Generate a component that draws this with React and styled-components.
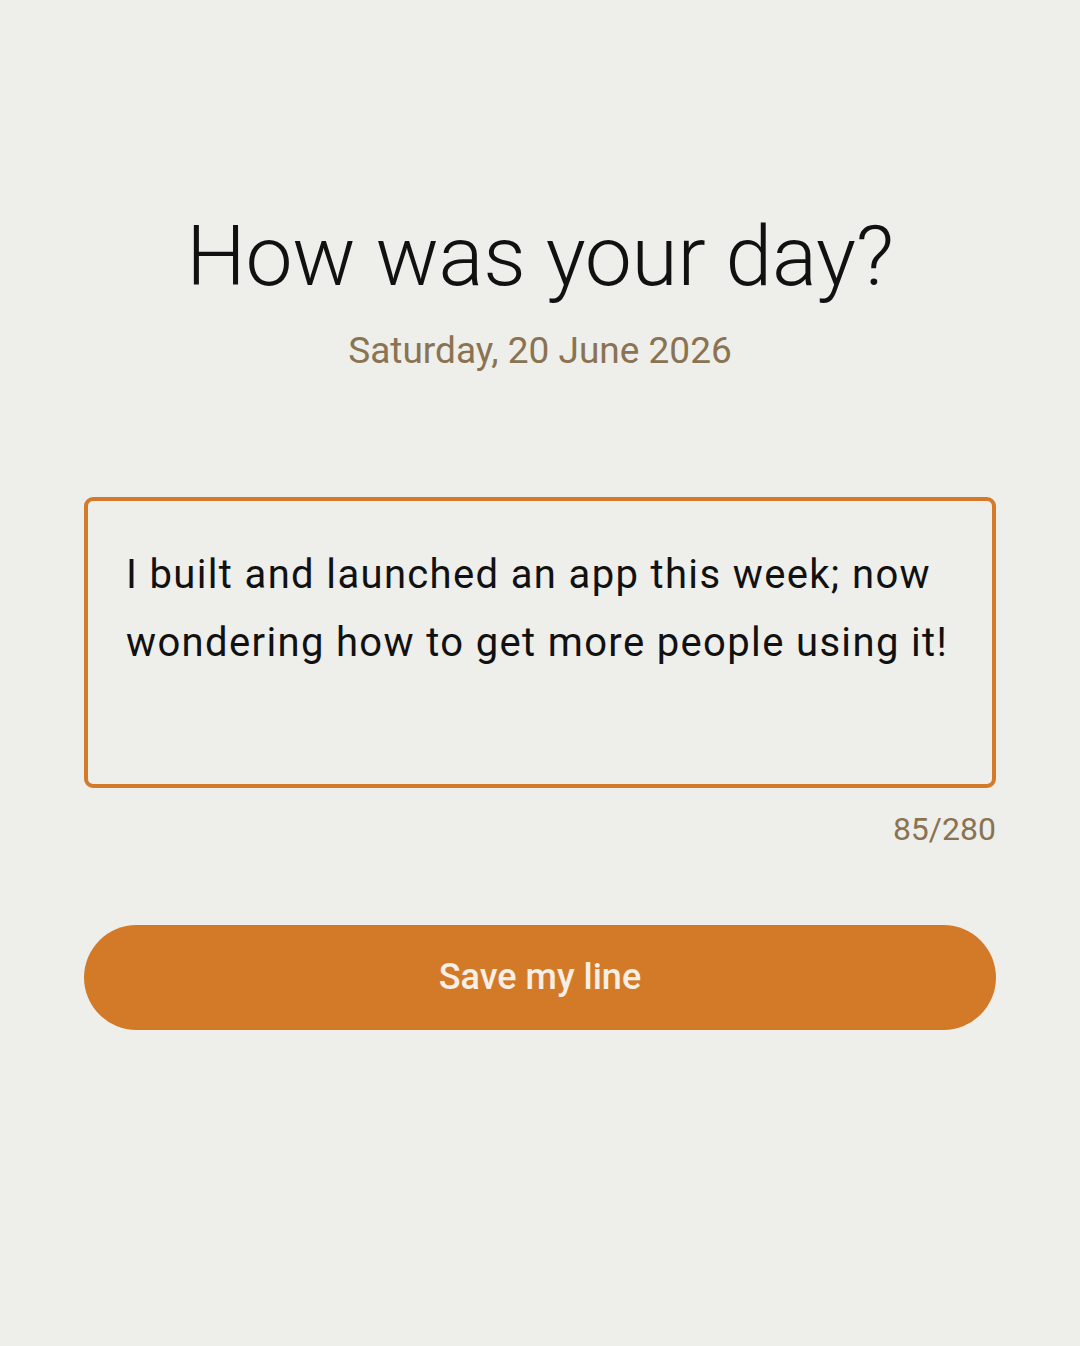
import React, { useState } from 'react'
import styled, { createGlobalStyle } from 'styled-components'

const GlobalStyle = createGlobalStyle`
  html, body {
    margin: 0;
    padding: 0;
    background: #eeeeeb;
  }
  body {
    font-family: Roboto, 'Noto Sans', sans-serif;
  }
`

const Page = styled.div`
  min-height: 1346px;
  box-sizing: border-box;
  padding: 207px 84px 0;
  display: flex;
  flex-direction: column;
  align-items: stretch;
`

const Title = styled.h1`
  margin: 0;
  font-family: Roboto, sans-serif;
  font-weight: 300;
  font-size: 84px;
  line-height: 1.2;
  letter-spacing: -0.3px;
  color: #111;
  text-align: center;
`

const DateLine = styled.div`
  margin-top: 21px;
  font-family: Roboto, sans-serif;
  font-size: 37px;
  line-height: 1.2;
  color: #8a7352;
  text-align: center;
`

const Entry = styled.textarea`
  margin-top: 124px;
  box-sizing: border-box;
  width: 100%;
  height: 291px;
  padding: 40px 38px;
  border: 4px solid #d37b2b;
  border-radius: 9px;
  background: transparent;
  resize: none;
  outline: none;
  font-family: Roboto, sans-serif;
  font-size: 40px;
  line-height: 68px;
  letter-spacing: 1.35px;
  color: #111;
  overflow: hidden;
`

const Counter = styled.div`
  margin-top: 22px;
  font-family: Roboto, sans-serif;
  font-size: 32px;
  line-height: 1.2;
  color: #8a7352;
  text-align: right;
`

const SaveButton = styled.button`
  margin-top: 76px;
  height: 105px;
  border: none;
  border-radius: 53px;
  background: #d37a28;
  color: #f7efe6;
  font-family: Roboto, sans-serif;
  font-weight: 500;
  font-size: 36px;
  cursor: pointer;
`

const MAX = 280

export default function App() {
  const [text, setText] = useState(
    'I built and launched an app this week; now wondering how to get more people using it!'
  )

  return (
    <>
      <GlobalStyle />
      <Page>
        <Title>How was your day?</Title>
        <DateLine>Saturday, 20 June 2026</DateLine>
        <Entry
          value={text}
          maxLength={MAX}
          onChange={e => setText(e.target.value)}
        />
        <Counter>{text.length}/{MAX}</Counter>
        <SaveButton>Save my line</SaveButton>
      </Page>
    </>
  )
}
